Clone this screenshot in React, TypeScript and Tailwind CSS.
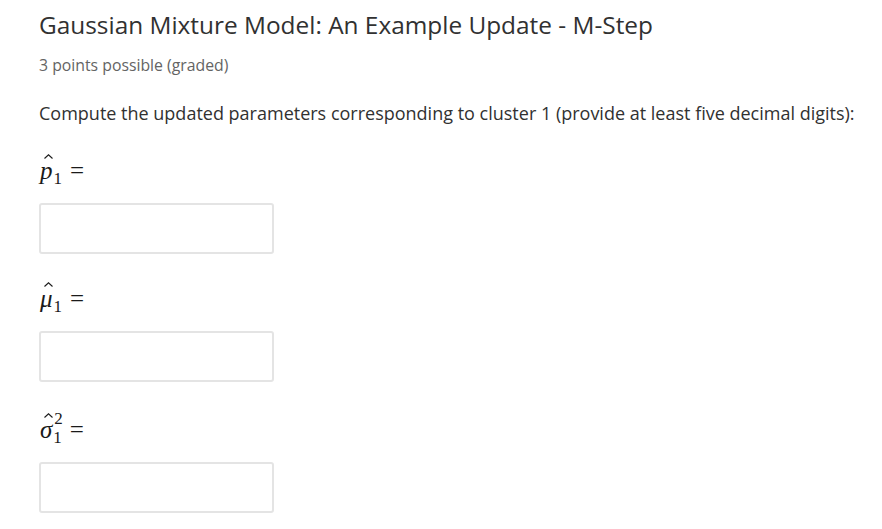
import React from "react";

function Hat({ base, sup }: { base: string; sup?: string }) {
  return (
    <span className="inline-flex items-end text-[#1a1a1a] font-['Liberation_Serif','DejaVu_Serif',serif]">
      <span className="relative inline-block italic text-[25px] leading-none">
        <svg className="absolute left-[4px] top-[-4px]" width="9" height="5" viewBox="0 0 9 5" fill="none">
          <path d="M0.5 4.5 L4.5 0.8 L8.5 4.5" stroke="#1a1a1a" strokeWidth="1.1" />
        </svg>
        {base}
      </span>
      <span className="relative inline-block text-[17px] leading-none ml-[1px]">
        {sup ? <span className="absolute top-[-13px] left-[1px] leading-[14px]">{sup}</span> : null}
        <span className="inline-block translate-y-[4px]">1</span>
      </span>
      <span className="ml-[8px] text-[25px] leading-none">=</span>
    </span>
  );
}

function Field({ label, className }: { label: React.ReactNode; className?: string }) {
  return (
    <div className={"flex flex-col " + (className ?? "")}>
      <div className="h-[30px] flex items-center pl-[1px]">{label}</div>
      <input
        type="text"
        className="mt-[18px] w-[235px] h-[51px] rounded-[3px] border-2 border-[#e4e4e4] bg-white outline-none"
      />
    </div>
  );
}

export default function App() {
  return (
    <div
      className="w-[882px] h-[529px] bg-white pl-[39px] pt-[8px] overflow-hidden"
      style={{ fontFamily: '"Open Sans", "Liberation Sans", sans-serif' }}
    >
      <h1 className="text-[24.4px] leading-[34px] text-[#313131] font-normal whitespace-nowrap">
        Gaussian Mixture Model: An Example Update - M-Step
      </h1>
      <p className="mt-[13px] text-[15.8px] leading-[20px] text-[#646464] whitespace-nowrap">3 points possible (graded)</p>
      <p className="mt-[25px] text-[18px] leading-[26px] text-[#313131] whitespace-nowrap">
        Compute the updated parameters corresponding to cluster 1 (provide at least five decimal digits):
      </p>
      <div className="mt-[29px] flex flex-col">
        <Field label={<Hat base="p" />} />
        <Field className="mt-[29px]" label={<Hat base="μ" />} />
        <Field className="mt-[32px]" label={<Hat base="σ" sup="2" />} />
      </div>
    </div>
  );
}
